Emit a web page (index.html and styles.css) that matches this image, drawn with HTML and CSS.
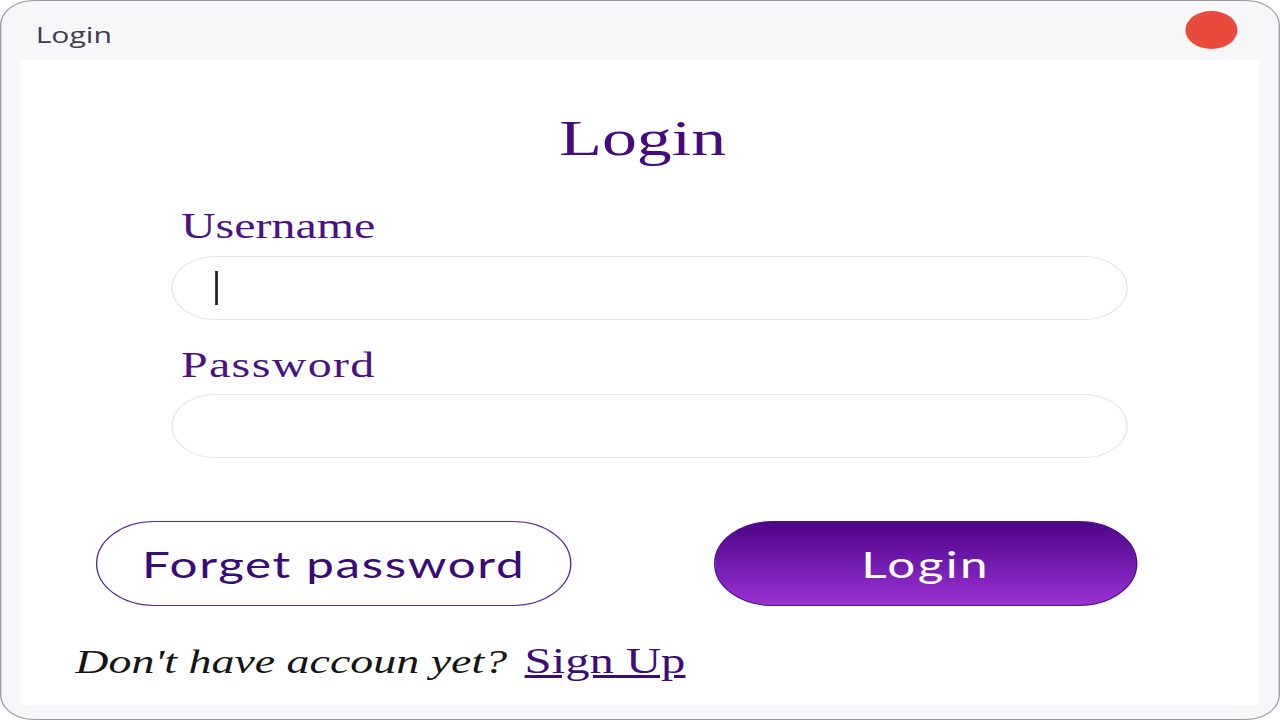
FILE: index.html
```html
<!DOCTYPE html>
<html lang="en">
<head>
<meta charset="utf-8">
<title>Login</title>
<link rel="stylesheet" href="styles.css">
</head>
<body>
<div class="window">
  <div class="titlebar">
    <span class="title">Login</span>
    <span class="close"></span>
  </div>
  <div class="panel">
    <h1 class="heading">Login</h1>
    <div class="form">
      <label class="label">Username</label>
      <div class="field"><span class="caret"></span></div>
      <label class="label label-pass">Password</label>
      <div class="field"></div>
    </div>
    <div class="actions">
      <button class="btn btn-outline">Forget password</button>
      <button class="btn btn-primary">Login</button>
    </div>
    <p class="signup"><em class="question">Don't have accoun yet?</em> <a class="link" href="#">Sign Up</a></p>
  </div>
</div>
</body>
</html>
```
FILE: styles.css
```css
html, body {
  margin: 0;
  padding: 0;
  background: #ffffff;
  overflow: hidden;
}

.window {
  box-sizing: border-box;
  width: 934px;
  height: 720px;
  border: 1px solid #9c9ca4;
  border-radius: 25px;
  background: #f7f7f9;
  transform: scaleX(1.3704);
  transform-origin: 0 0;
  display: flex;
  flex-direction: column;
  overflow: hidden;
}

.titlebar {
  height: 59px;
  flex: none;
  display: flex;
  align-items: center;
  justify-content: space-between;
  padding: 0 30px 0 25px;
}

.title {
  font-family: "Open Sans", "Noto Sans", sans-serif;
  font-size: 22px;
  color: #3c3c4e;
  margin-top: 6px;
}

.close {
  width: 38px;
  height: 38px;
  border-radius: 50%;
  background: #e84b3c;
  margin-top: -1px;
}

.panel {
  flex: 1;
  margin: 0 14px 14px 14px;
  background: #ffffff;
  display: flex;
  flex-direction: column;
}

.heading {
  margin: 48px 0 0 0;
  font-family: "Liberation Serif", "Times New Roman", serif;
  font-weight: normal;
  font-size: 51px;
  line-height: 60px;
  color: #440b80;
  text-align: center;
  padding-left: 4px;
}

.form {
  display: flex;
  flex-direction: column;
  margin: 39px 0 0 110px;
  width: 698px;
}

.label {
  font-family: "Liberation Serif", "Times New Roman", serif;
  font-size: 35px;
  line-height: 40px;
  color: #4a1282;
  padding-left: 7px;
  margin-bottom: 9px;
}

.label-pass {
  margin-top: 26px;
  margin-bottom: 8px;
  letter-spacing: 1px;
}

.field {
  box-sizing: border-box;
  height: 64px;
  border: 1.5px solid #e6e6e6;
  border-radius: 32px;
  background: #ffffff;
  display: flex;
  align-items: center;
  padding-left: 31px;
}

.caret {
  width: 2px;
  height: 34px;
  background: #222222;
}

.actions {
  display: flex;
  gap: 104px;
  margin: 63px 0 0 55px;
}

.btn {
  box-sizing: border-box;
  height: 85px;
  border-radius: 43px;
  font-family: Lato, "Liberation Sans", sans-serif;
  font-size: 36px;
  font-weight: 400;
  padding: 0;
  cursor: pointer;
}

.btn-outline {
  width: 347px;
  background: #ffffff;
  border: 1.5px solid #5b2b88;
  color: #3a0a78;
  letter-spacing: 1.2px;
}

.btn-primary {
  width: 309px;
  background: linear-gradient(to bottom, #4c0585 0%, #7a1fb6 60%, #9a32d0 100%);
  border: 1px solid #520f8a;
  color: #ffffff;
  letter-spacing: 1.8px;
}

.signup {
  margin: 35px 0 0 40px;
  font-family: "Liberation Serif", "Times New Roman", serif;
  font-size: 35px;
  line-height: 40px;
  color: #151515;
}

.question {
  font-style: italic;
  font-size: 33.5px;
}

.link {
  color: #3d0c78;
  text-decoration: underline;
  margin-left: 4px;
  font-size: 35.5px;
}
```
